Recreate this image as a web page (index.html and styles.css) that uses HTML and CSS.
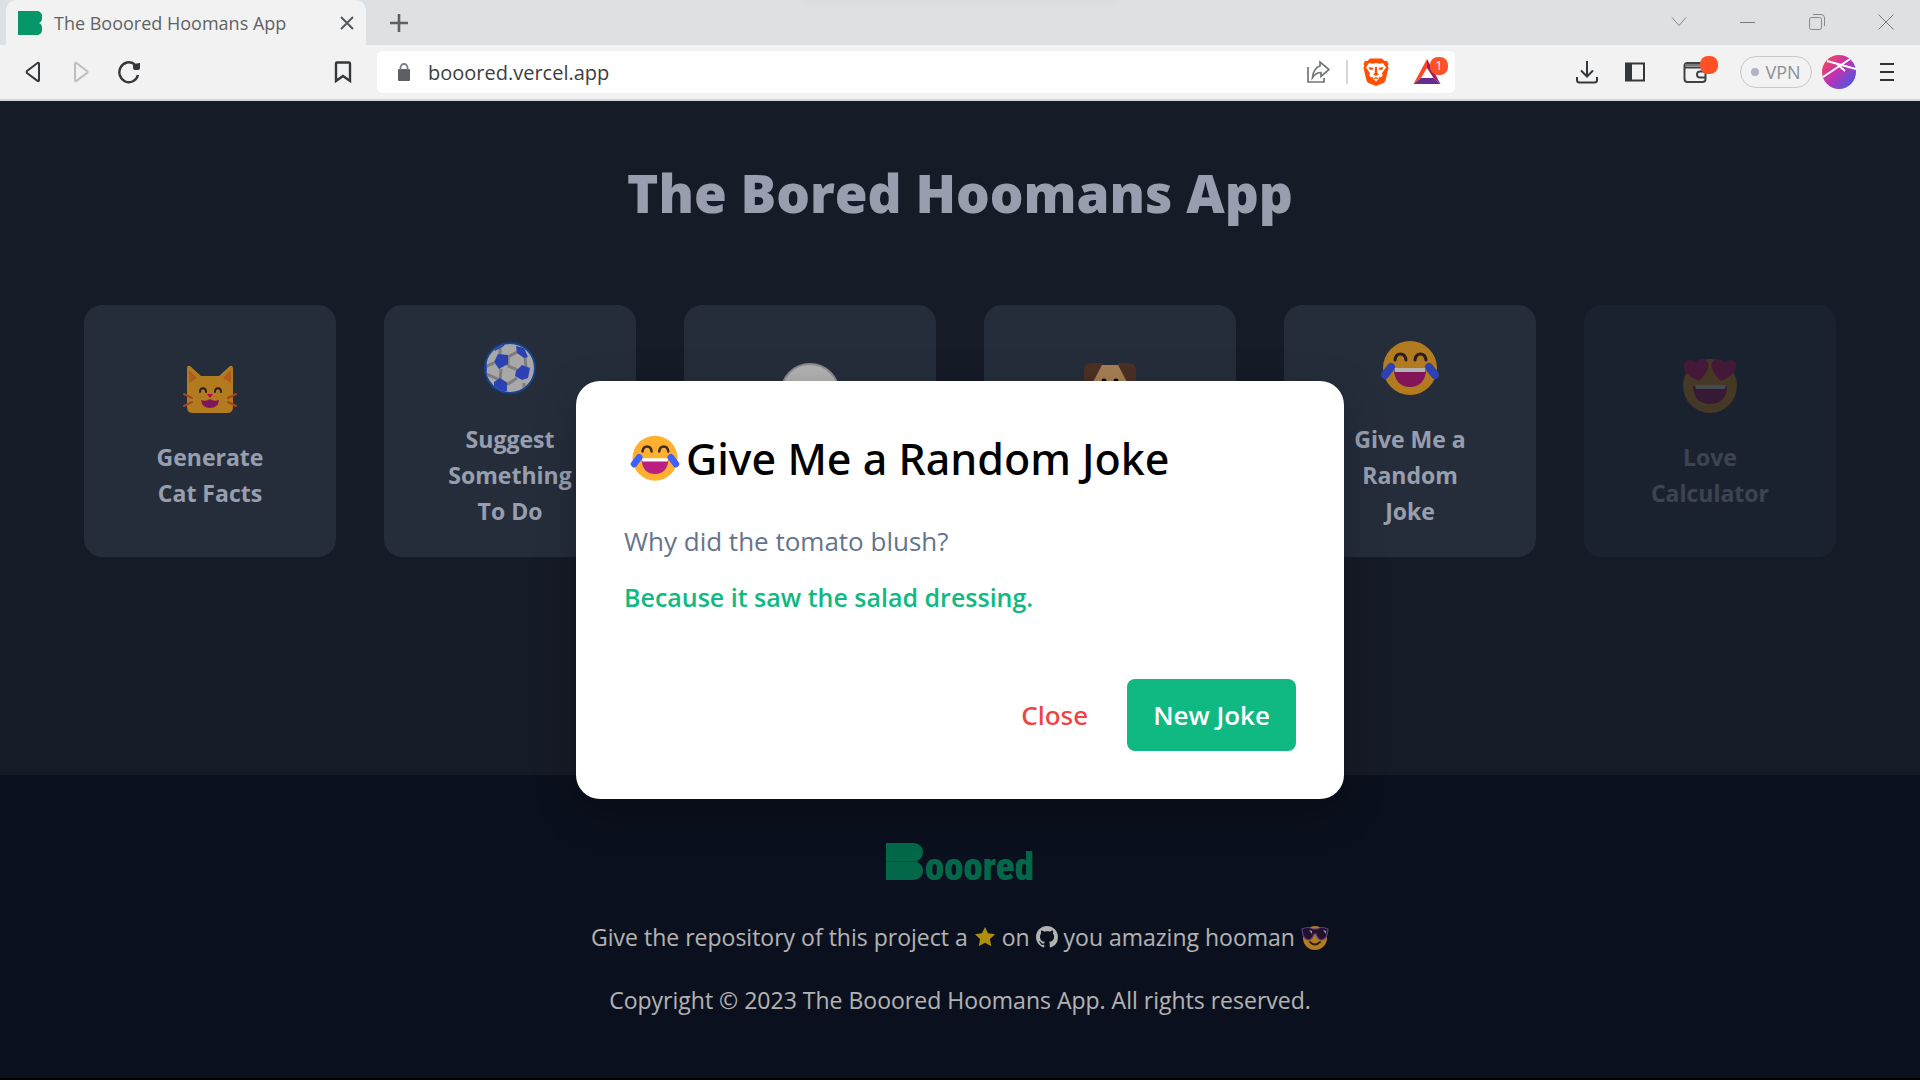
FILE: index.html
```html
<!DOCTYPE html>
<html lang="en">
<head>
<meta charset="utf-8">
<title>The Booored Hoomans App</title>
<link rel="stylesheet" href="styles.css">
</head>
<body>
<svg class="sprite" aria-hidden="true">
  <symbol id="joy" viewBox="0 0 72 72">
    <circle cx="36" cy="35" r="27" fill="#ffb02e"/>
    <path d="M21 27c1-8 10-8 11 0M41 27c1-8 10-8 11 0" fill="none" stroke="#402a32" stroke-width="3" stroke-linecap="round"/>
    <path d="M20 36h32c0 11-6 18-16 18s-16-7-16-18z" fill="#bb1d80"/>
    <path d="M20 35h32l-1 4H21z" fill="#fff"/>
    <path d="M17 34l-6 8M55 34l6 8" stroke="#3f5fff" stroke-width="8" stroke-linecap="round"/>
  </symbol>
</svg>
<div class="browser">
  <header class="chrome">
    <div class="tab-strip">
      <div class="tab">
        <svg class="favicon" viewBox="0 0 24 24"><path d="M0 0h18c4 0 6 2 6 5v2c0 3-1 4-3 5 2 1 3 2 3 5v2c0 3-2 5-6 5H0z" fill="#059669"/></svg>
        <span class="tab-title">The Booored Hoomans App</span>
        <button class="tab-close" aria-label="Close tab"><svg width="14" height="14" viewBox="0 0 14 14"><path d="M1 1l12 12M13 1L1 13" stroke="#54585b" stroke-width="2"/></svg></button>
      </div>
      <button class="new-tab" aria-label="New tab"><svg width="18" height="18" viewBox="0 0 18 18"><path d="M9 0v18M0 9h18" stroke="#5c6063" stroke-width="2.6"/></svg></button>
      <div class="window-controls">
        <button aria-label="Search tabs"><svg width="16" height="10" viewBox="0 0 16 10"><path d="M1 .5l7 8 7-8" fill="none" stroke="#85898c"/></svg></button>
        <button aria-label="Minimize"><svg width="16" height="16" viewBox="0 0 16 16"><path d="M0 8.500h15" stroke="#777b7e"/></svg></button>
        <button aria-label="Restore"><svg width="16" height="16" viewBox="0 0 16 16"><g fill="none" stroke="#85898c"><rect x=".5" y="3.500" width="12" height="12" rx="2"/><path d="M4 .5h8q3.500 0 3.500 3.500v8"/></g></svg></button>
        <button aria-label="Close window"><svg width="16" height="16" viewBox="0 0 16 16"><path d="M.5.5l15 15M15.500.5l-15 15" stroke="#777b7e"/></svg></button>
      </div>
    </div>
    <div class="toolbar">
      <div class="nav-buttons">
        <button aria-label="Back"><svg width="24" height="24" viewBox="0 0 24 24"><path d="M18 3.500v17q-.5 1-1.500.4L6 13q-1-1 0-2l10.500-8q1-.5 1.500.5z" fill="none" stroke="#34383b" stroke-width="2"/></svg></button>
        <button aria-label="Forward"><svg width="24" height="24" viewBox="0 0 24 24"><path d="M6 3.500v17q.5 1 1.500.4L18 13q1-1 0-2L7.500 3q-1-.5-1.500.5z" fill="none" stroke="#bcbec0" stroke-width="2"/></svg></button>
        <button aria-label="Reload"><svg width="24" height="24" viewBox="0 0 24 24"><path d="M21 15A9.500 10 0 1 1 17.500 4.200" fill="none" stroke="#34383b" stroke-width="2.400"/><path d="M16 4l7-1v5q0 2-2 2h-3q-2 0-2-2z" fill="#34383b"/></svg></button>
        <button class="bookmark" aria-label="Bookmark this page"><svg width="24" height="24" viewBox="0 0 24 24"><path d="M5 3.500q0-1 1-1h12q1 0 1 1V21l-7-5-7 5z" fill="none" stroke="#34383b" stroke-width="2.400"/></svg></button>
      </div>
      <div class="address-bar">
        <svg class="lock" width="24" height="24" viewBox="0 0 24 24"><rect x="6" y="9" width="12" height="12" rx="1" fill="#5c5f64"/><path d="M8.500 10V7.500a3.500 3.500 0 0 1 7 0V10" fill="none" stroke="#7a7d82" stroke-width="1.800"/></svg>
        <input class="url" type="text" aria-label="Address" value="booored.vercel.app">
        <button aria-label="Share"><svg width="24" height="24" viewBox="0 0 24 24"><g fill="none" stroke="#72767a" stroke-width="1.700"><path d="M2 7v15h16v-4"/><path d="M14 6V2l9 7.500-8 7v-4q-5 0-8.500 5Q7.500 8 14 6z"/></g></svg></button>
        <span class="divider"></span>
        <button aria-label="Brave Shields"><svg width="26" height="28" viewBox="0 0 26 28"><path d="M7 .5h12l2.500 2.500 2.500-.3 1.500 3.300-.8 2 .8 2-3 12.500q-.5 1.500-2 2.500L13 28l-7.500-3q-1.500-1-2-2.500L.5 10l.8-2-.8-2L2 2.700l2.500.3z" fill="#ff5000"/><path d="M6 5l3.500.8L13 5l3.500.8L20 5l3 4.500-4 5.500.6 2.500L18 19.500l-2-1 .3 2L13 23.500l-3.300-3 .3-2-2 1-1.600-2L7 15 3 9.500z" fill="#fff"/><path d="M5.500 9l4.500.8.500 1.700-3.500.5zM20.500 9l-4.500.8-.5 1.700 3.500.5zM12 9h2l.3 6 1.500 1.500-2.800 1.500-2.800-1.500 1.500-1.500zM10 20.500l3-1.500 3 1.500-1 .8-2-.8-2 .8z" fill="#ff5000"/></svg></button>
        <button class="badged rewards" aria-label="Brave Rewards"><svg width="28" height="26" viewBox="0 0 28 26"><path d="M14 0v9l-6 10-7.500 6z" fill="#ff4724"/><path d="M14 0v9l6.500 10L27.500 25z" fill="#9e1f63"/><path d="M.5 25L8 19h12.500l7 6z" fill="#662d91"/></svg><span class="badge rewards-badge">1</span></button>
      </div>
      <div class="tool-buttons">
        <button aria-label="Downloads"><svg width="24" height="24" viewBox="0 0 24 24"><g fill="none" stroke="#34383b" stroke-width="2"><path d="M12 1v15M6 10.500l6 6 6-6M2 17v3q0 2.500 2.500 2.500h15q2.500 0 2.500-2.500v-3"/></g></svg></button>
        <button aria-label="Sidebar"><svg width="20" height="20" viewBox="0 0 20 20"><rect x="1" y="1.500" width="18" height="17" fill="none" stroke="#34383b" stroke-width="2"/><path d="M1 1h6v18H1z" fill="#34383b"/></svg></button>
        <button class="badged wallet" aria-label="Wallet"><svg width="24" height="24" viewBox="0 0 24 24"><g fill="none" stroke="#3f4346" stroke-width="2"><rect x="1.500" y="3" width="21" height="19" rx="3"/><path d="M2 7.500h20M23 11.500h-6q-3 0-3 3t3 3h6"/></g><path d="M2 5h20" stroke="#777" stroke-width="2"/></svg><span class="badge wallet-badge"></span></button>
        <button class="vpn"><span class="vpn-dot"></span>VPN</button>
        <button class="avatar" aria-label="Profile"><svg width="34" height="34" viewBox="0 0 34 34"><defs><linearGradient id="av" x1="0" y1="0" x2="1" y2="1"><stop offset="0" stop-color="#ff4f3f"/><stop offset=".45" stop-color="#c630ae"/><stop offset="1" stop-color="#2e62f0"/></linearGradient></defs><circle cx="17" cy="17" r="17" fill="url(#av)"/><path d="M5 6l29 8M1 22L28 4M15 9l8 7" stroke="#fff" stroke-width="2"/></svg></button>
        <button aria-label="Menu"><svg width="16" height="20" viewBox="0 0 16 20"><path d="M1 2h14M1 10h14M1 18h14" stroke="#2f3336" stroke-width="2"/></svg></button>
      </div>
    </div>
  </header>

  <div class="page">
    <main class="main">
      <h1 class="headline">The Bored Hoomans App</h1>
      <div class="cards">
        <button class="card">
          <svg class="emoji" viewBox="0 0 72 72"><path d="M13 18q0-4 3-3l11 10h18l11-10q3-1 3 3v38q0 6-6 6H19q-6 0-6-6z" fill="#ffb02e"/><path d="M15 19l8 8-8 5zM57 19l-8 8 8 5z" fill="#ff822d"/><path d="M26 41c0-5 6-5 6 0M41 41c0-5 6-5 6 0" fill="none" stroke="#402a32" stroke-width="2" stroke-linecap="round"/><path d="M33 43h6l-3 4z" fill="#f70a8d"/><path d="M27 49q5 2 9-1 4 3 9 1-1 8-9 8t-9-8z" fill="#bb1d80"/><path d="M10 43l8 4M10 55l8-4M62 43l-8 4M62 55l-8-4" stroke="#f3602b" stroke-width="2" stroke-linecap="round"/></svg>
          <span class="card-label">Generate<br>Cat Facts</span>
        </button>
        <button class="card">
          <svg class="emoji" viewBox="0 0 72 72"><defs><clipPath id="ball"><circle cx="36" cy="35" r="24"/></clipPath></defs><circle cx="36" cy="35" r="26" fill="#1d63cf"/><circle cx="36" cy="35" r="24" fill="#f1f1f1"/><g clip-path="url(#ball)"><path d="M26 24V10M20 30L8 35M34 33l10 4 6 3M34 24l9-5 6-5M27 36l-1 12M26 47l8 4 9-6M34 25v8M51 22l1 14M26 47L10 40M50 50v12" fill="none" stroke="#b4b4b4" stroke-width="3"/><path d="M20 29l4-8 10 1v9l-9 5zM42 13l8 2 4 9-4 1-7-5zM42 38l6-6 8 3-2 10-6 2-7-4zM20 49l6-4 7 5v8l-6 1-7-5zM20 16l12-8-2 5-9 5zM10 30l3-2v14h-3z" fill="#3f5fff"/></g></svg>
          <span class="card-label">Suggest<br>Something<br>To Do</span>
        </button>
        <button class="card" aria-label="Facts">
          <svg class="emoji" viewBox="0 0 72 72"><ellipse cx="36" cy="42" rx="29" ry="29" fill="#fff" stroke="#c8c8c8" stroke-width="2"/></svg>
          <span class="card-label"></span>
        </button>
        <button class="card" aria-label="Dogs">
          <svg class="emoji" viewBox="0 0 72 72"><rect x="16" y="14" width="40" height="49" rx="7" fill="#f0b878"/><path d="M10 20q0-8 7-8h12L18 33v8h-8zM62 20q0-8-7-8H43l11 21v8h8z" fill="#6d4534"/><circle cx="30" cy="30" r="2.500"/><circle cx="42" cy="30" r="2.500"/></svg>
          <span class="card-label"></span>
        </button>
        <button class="card">
          <svg class="emoji"><use href="#joy"/></svg>
          <span class="card-label">Give Me a<br>Random<br>Joke</span>
        </button>
        <button class="card card-muted">
          <svg class="emoji" viewBox="0 0 72 72"><circle cx="36" cy="35" r="27" fill="#ffb02e"/><path d="M19 35h34c0 11-6 18-17 18s-17-7-17-18z" fill="#bb1d80"/><path d="M21 34h31l-1 4H22z" fill="#fff"/><path d="M25 30Q13 25 10 18q-2-8 5-9 4 0 7 3 2-5 8-4 6 2 4 9-2 7-9 13z" fill="#f8198c"/><path d="M47 30q12-5 15-12 2-8-5-9-4 0-7 3-2-5-8-4-6 2-4 9 2 7 9 13z" fill="#f8198c"/></svg>
          <span class="card-label">Love<br>Calculator</span>
        </button>
      </div>
    </main>
    <footer class="footer">
      <div class="logo"><svg width="37" height="37" viewBox="0 0 37 37"><path d="M0 0h27c6 0 10 4 10 9s-3 8-7 9.500c4 1.500 7 4.500 7 9.500s-4 9-10 9H0z" fill="#059669"/><path d="M0 18.500h32" stroke="#04804f" stroke-width="1"/></svg><span class="logo-text">ooored</span></div>
      <p class="footer-line">Give the repository of this project a
        <svg class="star" viewBox="0 0 24 24"><path d="M12 1l3.300 7 7.700 1-5.600 5.300L18.800 22 12 18.300 5.200 22l1.400-7.700L1 9l7.700-1z" fill="#facc15"/></svg>
        on
        <a href="#" aria-label="GitHub"><svg class="github" viewBox="0 0 16 16"><path fill="#fff" d="M8 0C3.580 0 0 3.580 0 8c0 3.540 2.290 6.530 5.470 7.590.4.070.55-.17.55-.38 0-.19-.01-.82-.01-1.490-2.010.37-2.530-.49-2.690-.94-.09-.23-.48-.94-.82-1.130-.28-.15-.68-.52-.01-.53.63-.01 1.080.58 1.230.82.72 1.210 1.870.87 2.330.66.070-.52.28-.87.51-1.070-1.780-.2-3.640-.89-3.640-3.950 0-.87.31-1.590.82-2.150-.08-.2-.36-1.020.08-2.120 0 0 .67-.21 2.200.82.64-.18 1.320-.27 2-.27s1.360.09 2 .27c1.530-1.040 2.200-.82 2.200-.82.44 1.100.16 1.920.08 2.120.51.56.82 1.270.82 2.150 0 3.070-1.870 3.750-3.650 3.950.29.25.54.73.54 1.480 0 1.070-.01 1.930-.01 2.200 0 .21.15.46.55.38A8.010 8.010 0 0 0 16 8c0-4.420-3.580-8-8-8z"/></svg></a>
        you amazing hooman
        <svg class="cool" viewBox="0 0 28 28"><circle cx="14" cy="14" r="12" fill="#ffb02e"/><path d="M1 5q6-3 11 0h4q5-3 11 0-.5 10-6 11-4 0-6-6h-2q-2 6-6 6-5.500-1-6-11z" fill="#321b41" stroke="#8059b8" stroke-width="1.200"/><path d="M8 6l3 1v3zM22 6l3 1v3z" fill="#e8dcf5"/><path d="M9 18q5 5 10 0" fill="none" stroke="#402a32" stroke-width="1.800" stroke-linecap="round"/></svg>
      </p>
      <p class="footer-line">Copyright © 2023 The Booored Hoomans App. All rights reserved.</p>
    </footer>
    <div class="overlay">
      <section class="modal" role="dialog" aria-modal="true" aria-labelledby="joke-title">
        <h2 class="modal-title" id="joke-title"><svg class="title-emoji"><use href="#joy"/></svg>Give Me a Random Joke</h2>
        <p class="question">Why did the tomato blush?</p>
        <p class="answer">Because it saw the salad dressing.</p>
        <div class="actions">
          <button class="close-button">Close</button>
          <button class="primary-button">New Joke</button>
        </div>
      </section>
    </div>
  </div>
</div>
</body>
</html>
```
FILE: styles.css
```css
* { box-sizing: border-box; }

body {
  margin: 0;
  background: #000;
  font-family: "Open Sans", "Noto Sans", sans-serif;
}

h1, h2, p { margin: 0; }

button {
  border: 0;
  padding: 0;
  background: none;
  font: inherit;
  color: inherit;
  cursor: pointer;
}

svg { display: block; flex: none; }

.sprite { position: absolute; width: 0; height: 0; }

.browser {
  display: flex;
  flex-direction: column;
  min-height: 100vh;
  padding-bottom: 2px;
}

/* Browser chrome */
.tab-strip {
  position: relative;
  display: flex;
  height: 45px;
  padding-left: 6px;
  overflow: hidden;
  background: #dde1e3;
}

.tab-strip::before {
  content: "";
  position: absolute;
  top: -12px;
  left: 42%;
  width: 16%;
  height: 8px;
  box-shadow: 0 0 14px 4px rgba(0, 0, 0, 0.04);
}

.tab {
  display: flex;
  align-items: center;
  width: 360px;
  padding: 0 12px;
  border-radius: 10px 10px 0 0;
  background: #f2f2f2;
}

.favicon { width: 24px; height: 24px; }

.tab-title {
  flex: 1;
  padding-left: 12px;
  font-size: 18px;
  color: #5f6366;
  white-space: nowrap;
}

.tab-close, .new-tab {
  display: grid;
  place-items: center;
}

.new-tab { width: 66px; }

.window-controls {
  display: flex;
  margin-left: auto;
}

.window-controls button {
  display: grid;
  place-items: center;
  width: 69px;
  height: 43px;
}

.toolbar {
  display: grid;
  grid-template-columns: 367px 1fr 465px;
  align-items: center;
  height: 56px;
  border-bottom: 2px solid #d2d6d9;
  background: #f2f2f2;
}

.nav-buttons, .tool-buttons {
  display: flex;
  align-items: center;
}

.nav-buttons { padding-left: 9px; }
.tool-buttons { justify-content: flex-end; padding-right: 9px; }

.toolbar button {
  display: grid;
  place-items: center;
  width: 48px;
  height: 40px;
}

.toolbar .bookmark { margin-left: auto; }

.address-bar {
  display: flex;
  align-items: center;
  height: 42px;
  margin-left: 10px;
  padding: 0 4px 0 15px;
  border-radius: 6px;
  background: #fff;
}

.url {
  flex: 1;
  min-width: 0;
  padding: 0 12px;
  border: 0;
  background: none;
  font: inherit;
  font-size: 20px;
  color: #3b3e42;
}

.divider {
  width: 2px;
  height: 24px;
  margin: 0 4px;
  background: #d4d6d8;
}

.toolbar .badged { position: relative; }
.toolbar .rewards { margin-left: 3px; }

.badge {
  position: absolute;
  border-radius: 8px;
  height: 18px;
  background: #ff5027;
  font-size: 12px;
  line-height: 18px;
  color: #fff;
}

.rewards-badge { top: 5px; left: 27px; width: 18px; }
.wallet-badge { top: 4px; left: 29px; width: 18px; }

.toolbar .wallet { margin: 0 21px 0 12px; }

.toolbar .vpn {
  display: flex;
  align-items: center;
  justify-content: center;
  gap: 6px;
  width: 72px;
  height: 32px;
  border: 1px solid #c6c9cc;
  border-radius: 16px;
  font-size: 18px;
  color: #8b9097;
}

.vpn-dot {
  width: 8px;
  height: 8px;
  border-radius: 50%;
  background: #b1b2c8;
}

.toolbar .avatar { width: 34px; margin: 0 7px 0 10px; }

/* Page */
.page {
  position: relative;
  display: flex;
  flex: 1;
  flex-direction: column;
}

.main {
  flex: 1;
  padding: 62px 84px;
  background: #1f2838;
}

.headline {
  margin-bottom: 82px;
  font-size: 53px;
  font-weight: 800;
  line-height: 60px;
  text-align: center;
  color: #dce3fb;
}

.cards {
  display: grid;
  grid-template-columns: repeat(6, 1fr);
  gap: 48px;
}

.card {
  display: flex;
  flex-direction: column;
  align-items: center;
  justify-content: center;
  gap: 16px;
  aspect-ratio: 1;
  border-radius: 18px;
  background: #354155;
  color: #dce3fb;
}

.card-muted { background: #314c5d; opacity: 0.3; }

.emoji { width: 72px; height: 72px; }

.card-label {
  min-height: 72px;
  font-size: 23px;
  font-weight: 700;
  line-height: 36px;
}

.footer {
  display: flex;
  flex-direction: column;
  align-items: center;
  padding: 68px 48px 60px;
  background: #0f172a;
  color: #fff;
}

.logo {
  display: flex;
  align-items: baseline;
  gap: 2px;
  height: 38px;
  margin-bottom: 38px;
}

.logo-text {
  font-family: "Roboto Condensed", Roboto, sans-serif;
  font-size: 39px;
  font-weight: 900;
  line-height: 38px;
  color: #059669;
}

.footer-line {
  font-size: 23px;
  line-height: 36px;
  text-align: center;
}

.footer-line + .footer-line { margin-top: 27px; }

.footer-line svg {
  display: inline-block;
  width: 22px;
  height: 22px;
  vertical-align: -2px;
}

.footer-line .cool { width: 28px; height: 28px; vertical-align: -6px; }

/* Joke dialog */
.overlay {
  position: absolute;
  inset: 0;
  display: grid;
  place-items: center;
  background: rgba(0, 0, 0, 0.3);
}

.modal {
  width: 768px;
  padding: 48px;
  border-radius: 24px;
  background: #fff;
  box-shadow: 0 12px 40px rgba(0, 0, 0, 0.25);
}

.modal-title {
  display: flex;
  align-items: center;
  margin-bottom: 34px;
  font-family: "Noto Sans", "Open Sans", sans-serif;
  font-size: 43px;
  font-weight: 500;
  line-height: 60px;
  color: #000;
}

.title-emoji { width: 62px; height: 60px; }

.question, .answer { line-height: 36px; }

.question { margin-bottom: 20px; font-size: 26px; color: #64748b; }
.answer { font-size: 25px; font-weight: 600; color: #10b981; }

.actions {
  display: flex;
  align-items: center;
  justify-content: flex-end;
  gap: 39px;
  margin-top: 64px;
  font-size: 26px;
}

.close-button {
  font-family: "Noto Sans", "Open Sans", sans-serif;
  font-weight: 500;
  color: #ef4444;
}

.primary-button {
  height: 72px;
  padding: 0 26px;
  border-radius: 8px;
  background: #10b981;
  font-weight: 600;
  color: #fff;
}
```
